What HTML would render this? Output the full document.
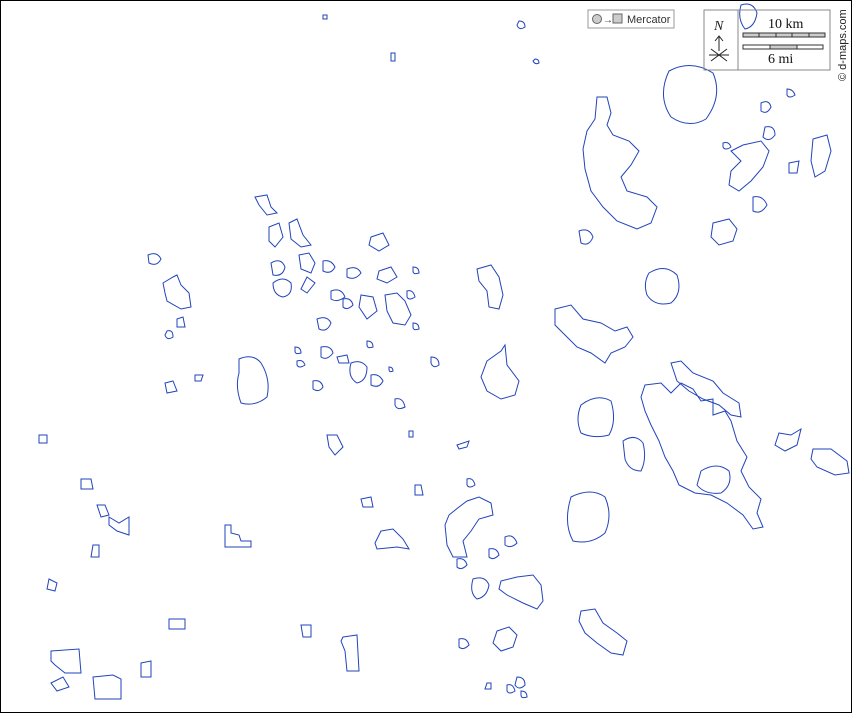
<!DOCTYPE html>
<html><head><style>
html,body{margin:0;padding:0;background:#fff}
#m{position:relative;width:852px;height:713px;overflow:hidden;box-sizing:border-box;border:1px solid #000;background:#fff}
svg{position:absolute;left:0;top:0}
.t{font-family:"Liberation Serif",serif}
</style></head><body><div id="m">
<svg width="852" height="713" viewBox="0 0 852 713">
<g fill="none" stroke="#2244bb" stroke-width="1">
<path d="M668 70 Q690 58 712 72 Q722 95 705 118 Q688 128 670 116 Q656 95 668 70Z"/>
<path d="M596 96 L606 96 610 112 606 124 612 134 628 140 638 150 630 164 620 176 626 190 646 196 656 206 650 222 636 228 616 220 602 206 590 190 584 168 582 148 586 130 594 118Z"/>
<path d="M740 4 Q752 0 756 12 Q754 26 744 28 Q736 18 740 4Z"/>
<path d="M730 150 L742 144 760 140 768 150 762 166 750 180 738 190 728 184 730 170 740 160Z"/>
<path d="M812 138 L826 134 830 150 824 170 814 176 810 160Z"/>
<path d="M760 102 Q768 98 770 106 Q766 114 760 110Z"/>
<path d="M764 126 Q774 124 774 134 Q768 142 762 136Z"/>
<path d="M752 196 Q762 194 766 204 Q760 214 752 210Z"/>
<path d="M786 88 Q792 88 794 94 Q788 98 786 94Z"/>
<path d="M722 142 Q728 140 730 146 Q724 150 722 146Z"/>
<path d="M788 162 L798 160 796 172 788 172Z"/>
<path d="M712 222 L728 218 736 228 732 240 718 244 710 236Z"/>
<path d="M578 230 Q588 226 592 236 Q588 246 580 242Z"/>
<path d="M476 268 L490 264 498 276 502 294 498 308 488 306 486 290 478 280Z"/>
<path d="M648 272 Q664 262 676 274 Q682 292 670 302 Q654 306 646 294 Q642 282 648 272Z"/>
<path d="M554 308 L570 304 582 318 600 322 614 330 626 326 632 336 624 346 610 352 604 362 590 352 576 346 566 336 554 324Z"/>
<path d="M486 360 L500 350 504 344 506 364 518 380 514 394 500 398 486 390 480 376Z"/>
<path d="M580 404 Q596 392 610 400 Q616 420 608 434 Q592 438 580 432 Q574 418 580 404Z"/>
<path d="M644 384 L660 382 670 392 680 382 692 388 700 400 712 398 712 414 724 410 730 420 736 440 746 456 740 470 748 486 760 498 756 512 762 526 752 528 742 514 726 502 710 494 694 492 678 484 672 470 664 456 658 440 650 424 644 410 640 396Z"/>
<path d="M670 362 L680 360 692 372 712 380 722 392 738 402 740 416 730 414 718 404 702 398 688 390 676 380Z"/>
<path d="M700 470 Q716 460 728 470 Q732 484 720 492 Q704 494 696 484Z"/>
<path d="M622 440 Q634 432 642 442 Q646 458 640 470 Q628 470 624 458Z"/>
<path d="M778 432 L790 434 800 428 796 444 784 450 774 444Z"/>
<path d="M812 448 L830 448 846 460 848 472 834 474 816 466 810 458Z"/>
<path d="M570 496 Q590 486 604 496 Q612 514 604 532 Q590 544 572 540 Q562 522 570 496Z"/>
<path d="M580 610 L594 608 602 622 616 632 626 640 622 654 610 652 596 642 584 632 578 620Z"/>
<path d="M238 358 Q252 352 260 362 Q270 378 266 396 Q254 406 240 402 Q234 386 238 372Z"/>
<path d="M162 282 L172 276 176 274 180 284 188 292 190 306 180 308 166 300 164 292Z"/>
<path d="M147 254 Q156 250 160 258 Q156 266 148 262Z"/>
<path d="M270 262 Q280 256 284 266 Q282 276 272 274Z"/>
<path d="M272 282 Q282 274 290 282 Q292 294 282 296 Q272 294 272 282Z"/>
<path d="M268 226 L278 222 282 236 274 246 268 240Z"/>
<path d="M288 222 L296 218 302 234 310 244 300 246 290 238Z"/>
<path d="M298 254 L308 252 314 262 310 272 300 268Z"/>
<path d="M322 260 Q330 258 334 266 Q330 274 322 270Z"/>
<path d="M360 294 L372 296 376 310 366 318 358 306Z"/>
<path d="M384 294 L396 292 404 300 410 314 404 324 392 322 386 310Z"/>
<path d="M370 236 L382 232 388 244 378 250 368 244Z"/>
<path d="M378 270 L390 266 396 276 386 282 376 278Z"/>
<path d="M350 362 Q360 358 366 366 Q366 380 356 382 Q346 376 350 362Z"/>
<path d="M370 374 Q378 372 382 380 Q378 388 370 384Z"/>
<path d="M316 318 Q326 314 330 322 Q326 332 318 328Z"/>
<path d="M320 346 Q330 344 332 352 Q326 360 320 356Z"/>
<path d="M312 380 Q320 378 322 386 Q318 392 312 388Z"/>
<path d="M326 434 L336 434 342 446 334 454 328 446Z"/>
<path d="M342 298 Q350 296 352 304 Q346 310 342 306Z"/>
<path d="M306 276 L314 282 306 292 300 288Z"/>
<path d="M330 290 Q340 286 344 296 Q336 302 330 298Z"/>
<path d="M346 268 Q356 264 360 272 Q354 280 346 276Z"/>
<path d="M294 346 Q300 346 300 352 Q294 354 294 350Z"/>
<path d="M296 360 Q302 358 304 364 Q298 368 296 364Z"/>
<path d="M336 356 L346 354 348 362 338 362Z"/>
<path d="M366 340 Q372 340 372 346 Q366 348 366 344Z"/>
<path d="M388 366 Q392 366 392 370 Q388 372 388 368Z"/>
<path d="M412 266 Q418 266 418 272 Q412 274 412 270Z"/>
<path d="M406 290 Q412 288 414 296 Q408 300 406 296Z"/>
<path d="M412 322 Q418 322 418 328 Q412 330 412 326Z"/>
<path d="M394 398 Q402 396 404 406 Q396 410 394 404Z"/>
<path d="M430 356 Q438 356 438 364 Q432 368 430 362Z"/>
<path d="M166 330 Q172 328 172 336 Q166 340 164 334Z"/>
<path d="M176 318 L182 316 184 326 176 326Z"/>
<path d="M164 382 L172 380 176 390 166 392Z"/>
<path d="M194 374 L202 374 200 380 194 380Z"/>
<path d="M456 444 L468 440 466 446 458 448Z"/>
<path d="M448 514 L458 506 466 500 478 496 490 502 492 514 478 518 470 530 462 540 466 556 452 556 446 544 444 524Z"/>
<path d="M380 530 L392 528 402 538 408 548 396 546 376 548 374 542Z"/>
<path d="M500 580 L516 576 532 574 540 584 542 600 536 608 522 602 506 594 498 588Z"/>
<path d="M472 578 Q484 574 488 584 Q486 596 476 598 Q468 592 472 578Z"/>
<path d="M496 630 L508 626 516 634 512 646 500 650 492 642Z"/>
<path d="M458 638 Q466 636 468 644 Q462 650 458 646Z"/>
<path d="M488 548 Q496 546 498 554 Q492 560 488 556Z"/>
<path d="M504 536 Q512 532 516 542 Q510 548 504 544Z"/>
<path d="M456 558 Q464 556 466 564 Q460 570 456 566Z"/>
<path d="M516 676 Q524 676 524 684 Q518 690 514 684Z"/>
<path d="M506 684 Q512 682 514 690 Q508 694 506 690Z"/>
<path d="M520 690 Q526 690 526 696 Q520 698 520 694Z"/>
<path d="M466 478 Q472 476 474 484 Q468 488 466 484Z"/>
<path d="M360 498 L370 496 372 506 362 506Z"/>
<path d="M414 484 L420 484 422 494 414 494Z"/>
<path d="M518 20 Q524 20 524 26 Q518 30 516 24Z"/>
<path d="M390 52 L394 52 394 60 390 60Z"/>
<path d="M322 14 L326 14 326 18 322 18Z"/>
<path d="M534 58 Q538 58 538 62 Q534 64 532 60Z"/>
<path d="M254 196 L266 194 270 206 276 212 266 214 258 204Z"/>
<path d="M80 478 L90 478 92 488 80 488Z"/>
<path d="M96 504 L104 504 108 514 100 516Z"/>
<path d="M108 516 L118 522 128 516 128 534 116 530 108 524Z"/>
<path d="M92 544 L98 544 98 556 90 556Z"/>
<path d="M224 524 L230 524 230 532 238 534 240 540 250 540 250 546 224 546Z"/>
<path d="M48 578 L56 582 54 590 46 588Z"/>
<path d="M168 618 L184 618 184 628 168 628Z"/>
<path d="M300 624 L310 624 310 636 302 636Z"/>
<path d="M342 636 L356 634 358 670 346 670 344 650 340 640Z"/>
<path d="M50 650 L78 648 80 672 64 672 54 664 50 660Z"/>
<path d="M50 682 L62 676 68 686 56 690Z"/>
<path d="M92 676 L112 674 120 678 120 698 94 698Z"/>
<path d="M140 662 L150 660 150 676 140 676Z"/>
<path d="M38 434 L46 434 46 442 38 442Z"/>
<path d="M408 430 L412 430 412 436 408 436Z"/>
<path d="M486 682 L490 682 490 688 484 688Z"/>
</g>
<rect x="587" y="9" width="86" height="18" fill="#fff" stroke="#999"/>
<circle cx="596" cy="18" r="4.5" fill="#ccc" stroke="#666"/>
<text x="602" y="22" font-family="Liberation Sans,sans-serif" font-size="10" fill="#333">→</text>
<rect x="612" y="13" width="9" height="9" fill="#ccc" stroke="#666"/>
<text x="626" y="22" font-family="Liberation Sans,sans-serif" font-size="11" fill="#333">Mercator</text>
<rect x="703" y="9" width="34" height="60" fill="none" stroke="#888"/>
<rect x="737" y="9" width="92" height="60" fill="none" stroke="#888"/>
<text x="713" y="29" class="t" font-size="14" font-style="italic" fill="#222">N</text>
<path d="M718 50 V35 M714 40 L718 35 722 40 M710 48 L726 60 M726 48 L710 60 M708 54 H728" stroke="#222" fill="none"/>
<text x="767" y="27" class="t" font-size="14" fill="#111">10 km</text>
<rect x="742" y="32" width="82" height="4" fill="#ccc" stroke="#333"/>
<path d="M758 32v4M775 32v4M791 32v4M808 32v4" stroke="#333"/>
<rect x="742" y="44" width="80" height="4" fill="#fff" stroke="#333"/>
<rect x="769" y="44" width="27" height="4" fill="#ccc" stroke="#333"/>
<text x="767" y="62" class="t" font-size="14" fill="#111">6 mi</text>
<text transform="translate(845,80) rotate(-90)" font-family="Liberation Sans,sans-serif" font-size="11" fill="#222">© d-maps.com</text>
</svg></div></body></html>
